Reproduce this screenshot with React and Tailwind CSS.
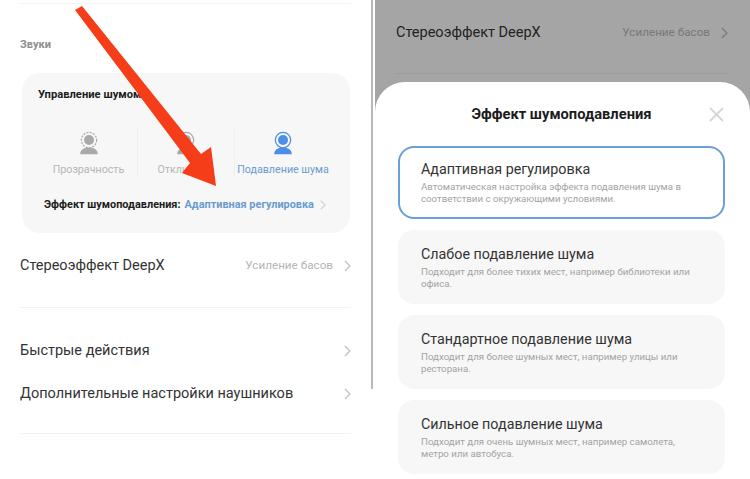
const font = { fontFamily: '"Roboto", "Noto Sans", sans-serif' };

const Chevron = ({ className = "" }) => (
  <svg viewBox="0 0 9 15" fill="none" className={className}>
    <path d="M1.2 1.2 7.6 7.5 1.2 13.8" stroke="currentColor" strokeWidth="1.8" />
  </svg>
);

const Person = ({ color, dashed }) => (
  <svg viewBox="0 0 24 28" fill="none" className="w-[20px] h-[24px]">
    <circle cx="12" cy="10.5" r="9.2" stroke={color} strokeWidth="1.5" strokeDasharray={dashed ? "2.4 1.6" : undefined} />
    <circle cx="12" cy="10.5" r="6" fill={color} />
    <path d="M1.500 27.500c0-5 4-8 10.500-8s10.500 3 10.500 8z" fill={color} />
  </svg>
);

const Mode = ({ label, color, textClass, dashed, border }) => (
  <div className={`w-[97px] flex flex-col items-center pt-[3px] ${border ? "border-l border-[#efefef]" : ""}`}>
    <Person color={color} dashed={dashed} />
    <span className={`mt-[9px] text-[10.7px] leading-[12px] whitespace-nowrap ${textClass}`}>{label}</span>
  </div>
);

const Row = ({ title, value, className = "" }) => (
  <div className={`flex items-center justify-between ${className}`}>
    <span className="text-[14.5px] leading-[20px] text-[#333333]">{title}</span>
    <div className="flex items-center gap-[11px]">
      {value && <span className="text-[11.7px] text-[#b5b5b5]">{value}</span>}
      <Chevron className="w-[7px] h-[12px] text-[#c4c4c4]" />
    </div>
  </div>
);

const Option = ({ title, desc, active }) => (
  <div
    className={`rounded-[16px] flex flex-col justify-center ${
      active ? "h-[73px] border-2 border-[#6a9fdc] bg-white px-[21px]" : "h-[74px] bg-[#f7f7f7] px-[23px]"
    }`}
  >
    <div className="text-[14.3px] leading-[19px] text-[#333333]">{title}</div>
    <div className="mt-[2px] text-[9.7px] leading-[12px] text-[#a3a3a3] w-[278px]">{desc}</div>
  </div>
);

const options = [
  {
    title: "Адаптивная регулировка",
    desc: "Автоматическая настройка эффекта подавления шума в соответствии с окружающими условиями.",
    active: true,
  },
  { title: "Слабое подавление шума", desc: "Подходит для более тихих мест, например библиотеки или офиса." },
  { title: "Стандартное подавление шума", desc: "Подходит для более шумных мест, например улицы или ресторана." },
  { title: "Сильное подавление шума", desc: "Подходит для очень шумных мест, например самолета, метро или автобуса." },
];

export default function App() {
  return (
    <div className="relative w-[750px] h-[479px] overflow-hidden bg-white flex" style={font}>
      {/* left screen */}
      <div className="w-[371px] shrink-0 pl-[20px] pr-[20px] pt-[3px]">
        <div className="h-px bg-[#f4f4f4]" />
        <div className="mt-[34px] text-[11px] leading-[14px] font-bold text-[#8e8e8e]">Звуки</div>
        <div className="mt-[21px] ml-[2px] w-[328px] h-[160px] rounded-[18px] bg-[#f7f7f7] pt-[15px]">
          <div className="pl-[16px] text-[11.2px] leading-[14px] font-bold text-[#1c1c1c]">Управление шумом</div>
          <div className="mt-[26px] flex px-[18px]">
            <Mode label="Прозрачность" color="#a9a9a9" textClass="text-[#b5b5b5]" dashed />
            <Mode label="Отключено" color="#a9a9a9" textClass="text-[#b5b5b5]" border />
            <Mode label="Подавление шума" color="#4d8fe6" textClass="text-[#6a9ccf]" border />
          </div>
          <div className="mt-[22px] flex items-center pl-[22px] text-[10.9px] leading-[14px] font-bold whitespace-nowrap">
            <span className="text-[#1c1c1c]">Эффект шумоподавления:</span>
            <span className="ml-[4px] text-[#6a9ccf]">Адаптивная регулировка</span>
            <Chevron className="ml-[6px] w-[6px] h-[10px] text-[#d2d2d2]" />
          </div>
        </div>
        <Row title="Стереоэффект DeepX" value="Усиление басов" className="mt-[23px]" />
        <div className="mt-[31px] h-px bg-[#f2f2f2]" />
        <Row title="Быстрые действия" className="mt-[33px]" />
        <Row title="Дополнительные настройки наушников" className="mt-[23px]" />
        <div className="mt-[29px] h-px bg-[#f2f2f2]" />
      </div>

      {/* scrollbar between screens */}
      <div className="w-[4px] shrink-0">
        <div className="w-[2px] h-[389px] bg-[#b8b8b8]" />
      </div>

      {/* right screen */}
      <div className="flex-1 bg-[#a5a5a5] flex flex-col">
        <div className="px-[21px] pt-[23px]">
          <div className="flex items-center justify-between pr-[1px]">
            <span className="text-[14.5px] leading-[20px] text-[#222222]">Стереоэффект DeepX</span>
            <div className="flex items-center gap-[11px]">
              <span className="text-[11.7px] text-[#787878]">Усиление басов</span>
              <Chevron className="w-[7px] h-[12px] text-[#7c7c7c]" />
            </div>
          </div>
          <div className="mt-[30px] h-px bg-[#9c9c9c]" />
        </div>
        <div className="mt-[8px] flex-1 bg-white rounded-t-[30px] pt-[17px] pl-[23px] pr-[25px]">
          <div className="relative flex items-center justify-center h-[30px]">
            <span className="text-[14.7px] font-bold text-[#1c1c1c]">Эффект шумоподавления</span>
            <svg width="15" height="15" viewBox="0 0 15 15" fill="none" className="absolute right-[1px] top-[8px]">
              <path d="M1 1 14 14M14 1 1 14" stroke="#d6d6d6" strokeWidth="1.8" />
            </svg>
          </div>
          <div className="mt-[17px] flex flex-col gap-[11px]">
            {options.map((o) => (
              <Option key={o.title} {...o} />
            ))}
          </div>
        </div>
      </div>

      {/* red arrow drawn over the screenshot */}
      <svg className="absolute left-0 top-0 pointer-events-none" width="375" height="200" viewBox="0 0 375 200">
        <polygon points="75,10 82,6 201,154 211,147 216,186 182,173 190,163" fill="#f53d1a" />
      </svg>
    </div>
  );
}
